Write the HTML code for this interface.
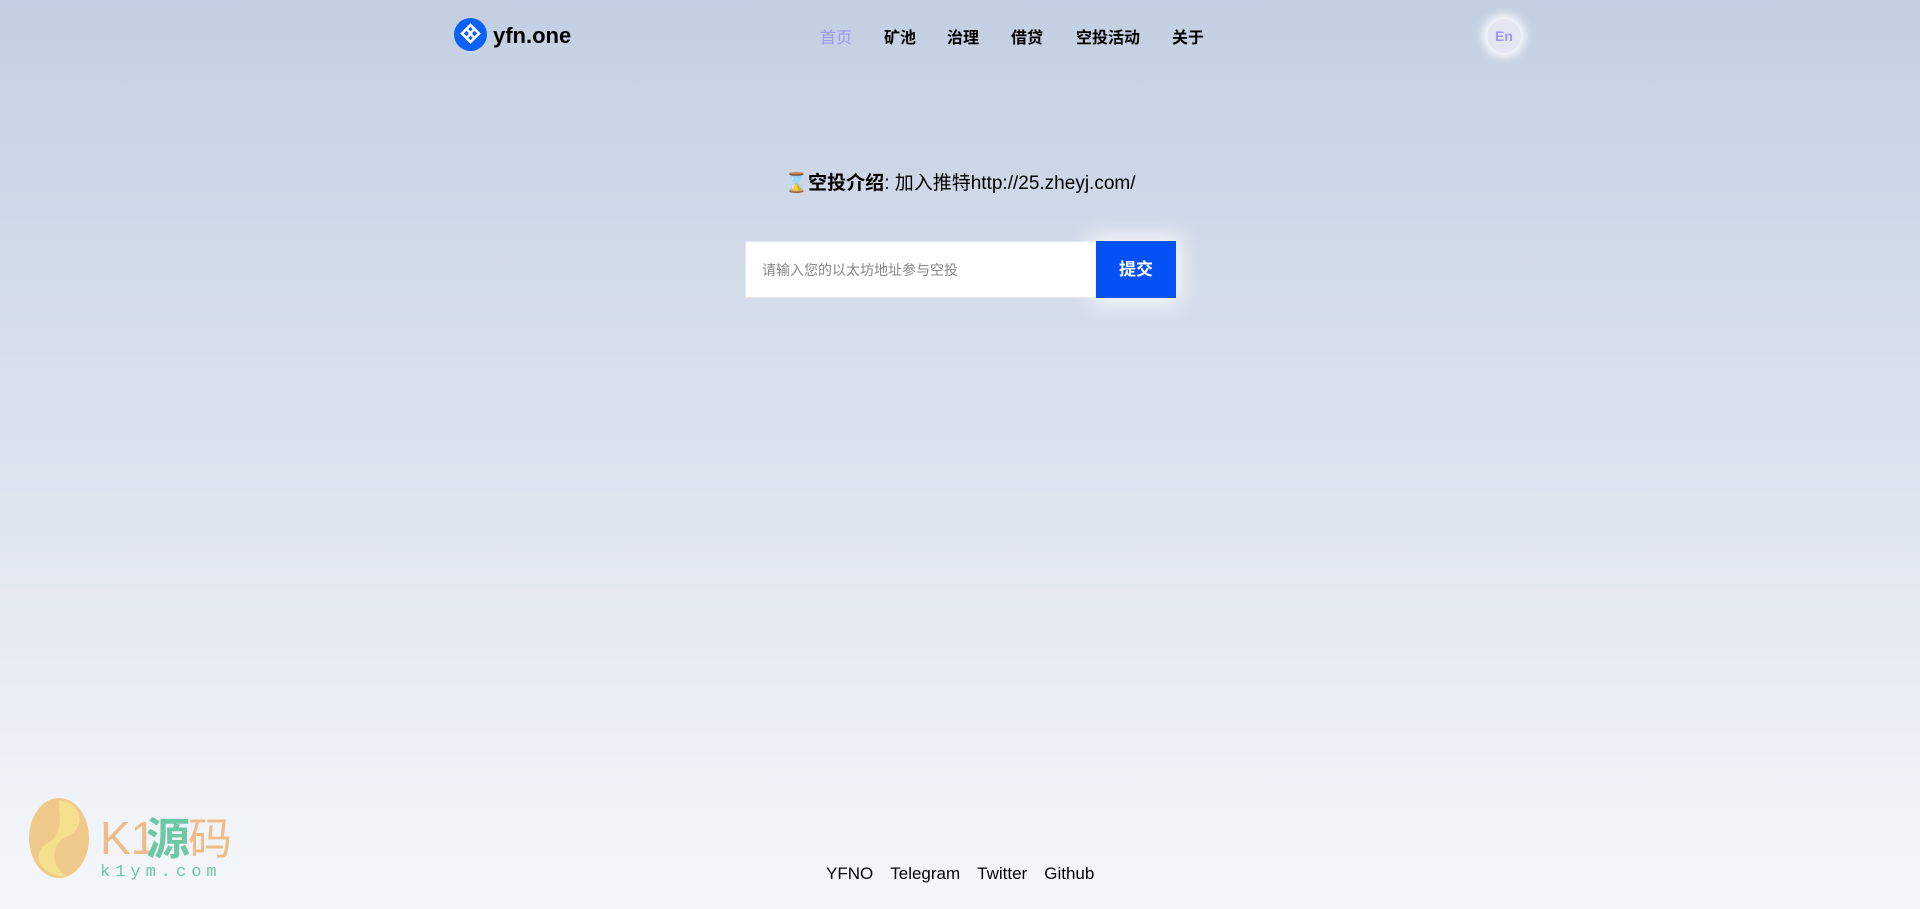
<!DOCTYPE html>
<html><head><meta charset="utf-8"><style>
*{margin:0;padding:0;box-sizing:border-box}
html,body{width:1920px;height:909px;overflow:hidden}
body{background:linear-gradient(180deg,#c3cfe2 0%,#f5f7fa 100%);font-family:"Liberation Sans","Noto Sans CJK SC",sans-serif;color:#000;position:relative}
.logo{position:absolute;left:454px;top:18px;display:flex;align-items:center}
.logo .t{font-size:22px;font-weight:bold;margin-left:6px;margin-top:3px}
.nav{position:absolute;top:24px;left:820px;font-size:16px;font-weight:bold;white-space:nowrap}
.nav span{position:absolute;top:0}
.en{position:absolute;left:1487px;top:19px;width:34px;height:34px;border-radius:50%;background:#e3e7f1;box-shadow:0 0 10px 4px #fff;color:#9c98f0;font-size:14px;font-weight:bold;text-align:center;line-height:34px}
.h{position:absolute;top:168px;left:0;width:1920px;text-align:center;font-size:19px}
.form{position:absolute;left:745px;top:241px;height:57px;display:flex}
.inp{width:351px;height:57px;background:#fff;font-size:14px;color:#888;padding-left:16px;line-height:57px;border:1px solid #e6e8ee}
.btn{width:80px;height:57px;background:#0651f5;color:#fff;font-size:17px;font-weight:bold;text-align:center;line-height:57px;box-shadow:0 0 20px 6px rgba(255,255,255,.8)}
.foot{position:absolute;top:864px;left:826px;font-size:17px;white-space:nowrap}
.foot span{margin-right:17px}
.wm{position:absolute;left:28px;top:798px}
</style></head><body>
<div class="logo">
<svg width="33" height="33" viewBox="0 0 33 33"><circle cx="16.5" cy="16.5" r="16.5" fill="#0a62f6"/><path d="M16.5 7 L25 15.5 L16.5 24 L8 15.5Z" fill="none" stroke="#fff" stroke-width="2.6"/><path d="M12.5 11 L17 15.5 L12.5 20 M20.5 11 L16 15.5 L20.5 20" fill="none" stroke="#fff" stroke-width="2.4"/></svg>
<span class="t">yfn.one</span></div>
<div class="nav">
<span style="left:0;color:#9b97ee;font-weight:normal">首页</span>
<span style="left:64px">矿池</span>
<span style="left:127px">治理</span>
<span style="left:191px">借贷</span>
<span style="left:256px">空投活动</span>
<span style="left:352px">关于</span>
</div>
<div class="en">En</div>
<div class="h">⌛<b>空投介绍</b>: 加入推特http://25.zheyj.com/</div>
<div class="form"><div class="inp">请输入您的以太坊地址参与空投</div><div class="btn">提交</div></div>
<div class="foot"><span>YFNO</span><span>Telegram</span><span>Twitter</span><span style="margin:0">Github</span></div>
<div class="wm">
<svg width="210" height="82" viewBox="0 0 210 82"><ellipse cx="31" cy="40" rx="30" ry="40" fill="#efc98a"/><path d="M31 2 C55 5 58 30 40 38 C22 44 22 70 40 79 C10 78 2 55 20 45 C38 35 30 10 31 2Z" fill="#f5e08d"/>
<text x="72" y="56" font-family="Liberation Sans,sans-serif" font-size="46" fill="#efbb86">K1</text>
<text x="118" y="56" font-family="Noto Sans CJK SC,sans-serif" font-size="44" font-weight="bold" fill="#6dc8a5">源</text>
<text x="160" y="56" font-family="Noto Sans CJK SC,sans-serif" font-size="44" fill="#efbb86">码</text>
<text x="72" y="78" font-family="Liberation Mono,monospace" font-size="17" letter-spacing="5" fill="#6dc8a5">k1ym.com</text></svg>
</div>
</body></html>
